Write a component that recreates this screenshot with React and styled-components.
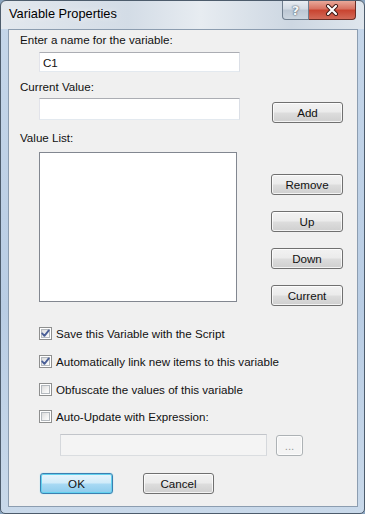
import React from 'react';
import styled, { createGlobalStyle } from 'styled-components';

const GlobalStyle = createGlobalStyle`
  html, body { margin:0; padding:0; background:#8aa4bf; overflow:hidden; }
  body { font-family: "Liberation Sans", Arial, sans-serif; }
`;

const Window = styled.div`
  width:365px;
  height:514px;
  box-sizing:border-box;
  display:flex;
  flex-direction:column;
  padding:0 6px 6px 7px;
  border:1px solid #4d5c6c;
  border-radius:6px 6px 5px 5px;
  background:
    linear-gradient(90deg, #e3e8ee 0%, #d3dce6 35%, #e7ecf1 55%, #cdd7e2 80%, #dfe6ed 100%) top / 100% 28px no-repeat,
    linear-gradient(180deg, #c6d7ea 0%, #b9cde4 60%, #c9d9ea 100%);
`;

const TitleBar = styled.div`
  height:28px;
  display:flex;
  align-items:flex-start;
  justify-content:space-between;
`;

const Caption = styled.div`
  font-family:"Liberation Sans", Arial, sans-serif;
  font-size:12.8px;
  line-height:16px;
  color:#000;
  padding:5px 0 0 1px;
  text-shadow:0 0 6px rgba(255,255,255,.9);
`;

const CaptionButtons = styled.div`
  display:flex;
  margin-right:2px;
`;

const CaptionButton = styled.div`
  width:${p => p.$w}px;
  height:19px;
  box-sizing:border-box;
  display:flex;
  align-items:center;
  justify-content:center;
  border:1px solid ${p => (p.$close ? '#6b2d25' : '#6f7e8e')};
  border-top:none;
  border-left:${p => (p.$close ? 'none' : '1px solid #6f7e8e')};
  border-radius:${p => (p.$close ? '0 0 4px 0' : '0 0 0 4px')};
  background:${p =>
    p.$close
      ? 'linear-gradient(180deg, #e9a99a 0%, #d7705f 45%, #c8432f 50%, #d26a58 100%)'
      : 'linear-gradient(180deg, #e8edf2 0%, #d2dae3 45%, #bcc7d3 50%, #cbd5df 100%)'};
  font:bold 13px "DejaVu Sans", sans-serif;
  color:#f4f6f8;
  text-shadow:0 0 2px #4a5a6a, 0 0 1px #4a5a6a;
`;

const Client = styled.div`
  flex:1;
  display:flex;
  flex-direction:column;
  align-items:flex-start;
  padding:3px 0 0 11px;
  background:#f0f0f0;
  border:1px solid #8c9db0;
`;

const Label = styled.div`
  font-size:11.6px;
  line-height:14px;
  color:#111;
  margin-top:${p => p.$mt || 0}px;
`;

const Row = styled.div`
  display:flex;
  align-items:flex-start;
  margin-top:${p => p.$mt || 0}px;
  margin-left:${p => p.$ml || 0}px;
`;

const TextBox = styled.input`
  width:${p => p.$w}px;
  height:${p => p.$h}px;
  box-sizing:border-box;
  margin:0 0 0 ${p => p.$ml || 0}px;
  margin-top:${p => p.$mt || 0}px;
  padding:0 3px;
  font:11.6px "Liberation Sans", Arial, sans-serif;
  color:#111;
  background:#fff;
  border:1px solid;
  border-color:#abadb3 #dbdfe6 #e3e9ef #e2e3ea;
  outline:none;

  &:disabled {
    background:#f4f4f4;
    border-color:#c2c5ca #d5d8dc #dadde0 #d5d8dc;
  }
`;

const ListBox = styled.div`
  width:198px;
  height:150px;
  box-sizing:border-box;
  background:#fff;
  border:1px solid #828790;
`;

const ButtonColumn = styled.div`
  display:flex;
  flex-direction:column;
  gap:16px;
  margin-left:34px;
  margin-top:22px;
  margin-bottom:-4px;
`;

const Button = styled.button`
  width:${p => p.$w || 72}px;
  height:${p => p.$h || 21}px;
  box-sizing:border-box;
  margin:${p => p.$mt || 0}px 0 0 ${p => p.$ml || 0}px;
  padding:0;
  font:11.6px "Liberation Sans", Arial, sans-serif;
  color:#111;
  border:1px solid #707070;
  border-radius:3px;
  background:linear-gradient(180deg, #f2f2f2 0%, #ebebeb 48%, #dddddd 52%, #cfcfcf 100%);
  box-shadow:inset 0 0 0 1px rgba(255,255,255,.75);

  &:disabled {
    color:#9a9a9a;
    border-color:#adb2b5;
    background:#f4f4f4;
    box-shadow:inset 0 0 0 1px #fcfcfc;
  }
`;

const DefaultButton = styled(Button)`
  border-color:#3c7fb1;
  background:linear-gradient(180deg, #e8f5fc 0%, #d0ebf9 48%, #a9daf4 52%, #8ccbec 100%);
  box-shadow:inset 0 0 0 1px #63d2ef, 0 0 1px #63d2ef;
`;

const CheckRow = styled.label`
  display:flex;
  align-items:center;
  gap:4px;
  height:17px;
  margin-left:19px;
  margin-top:${p => p.$mt}px;
  font-size:11.6px;
  color:#111;
`;

const Box = styled.span`
  width:13px;
  height:13px;
  box-sizing:border-box;
  flex:none;
  display:grid;
  place-items:center;
  border:1px solid #8e8f8f;
  background:#fff;

  & > * { grid-area:1 / 1; }
`;

const BoxInner = styled.span`
  width:9px;
  height:9px;
  box-sizing:border-box;
  border:1px solid #b4b9be;
  background:linear-gradient(135deg, #dcdcdc 0%, #f2f2f2 60%, #fdfdfd 100%);
`;

function Check({ checked, mt, children }) {
  return (
    <CheckRow $mt={mt}>
      <Box>
        <BoxInner />
        {checked && (
          <svg width="11" height="11" viewBox="0 0 11 11">
            <path d="M2.2 5.4 L4.4 7.8 L8.8 2.4" fill="none" stroke="#4a5f97" strokeWidth="1.9" strokeLinecap="round" strokeLinejoin="round" />
          </svg>
        )}
      </Box>
      {children}
    </CheckRow>
  );
}

export default function App() {
  return (
    <>
      <GlobalStyle />
      <Window>
        <TitleBar>
          <Caption>Variable Properties</Caption>
          <CaptionButtons>
            <CaptionButton $w={27}>?</CaptionButton>
            <CaptionButton $w={47} $close>
              <svg width="14" height="12" viewBox="0 0 14 12">
                <path d="M3 2 L11 10 M11 2 L3 10" stroke="#3b1712" strokeWidth="4" strokeLinecap="round" />
                <path d="M3 2 L11 10 M11 2 L3 10" stroke="#ffffff" strokeWidth="2.2" strokeLinecap="round" />
              </svg>
            </CaptionButton>
          </CaptionButtons>
        </TitleBar>
        <Client>
          <Label>Enter a name for the variable:</Label>
          <TextBox $w={201} $h={20} $ml={19} $mt={5} defaultValue="C1" />
          <Label $mt={8}>Current Value:</Label>
          <Row $mt={4} $ml={19}>
            <TextBox $w={201} $h={22} defaultValue="" />
            <Button $w={71} $ml={32} $mt={4}>Add</Button>
          </Row>
          <Label $mt={8}>Value List:</Label>
          <Row $mt={7} $ml={19}>
            <ListBox />
            <ButtonColumn>
              <Button>Remove</Button>
              <Button>Up</Button>
              <Button>Down</Button>
              <Button>Current</Button>
            </ButtonColumn>
          </Row>
          <Check checked mt={23}>Save this Variable with the Script</Check>
          <Check checked mt={11}>Automatically link new items to this variable</Check>
          <Check mt={11}>Obfuscate the values of this variable</Check>
          <Check mt={10}>Auto-Update with Expression:</Check>
          <Row $mt={9} $ml={40}>
            <TextBox $w={207} $h={22} disabled defaultValue="" />
            <Button $w={27} $h={21} $ml={9} $mt={1} disabled>...</Button>
          </Row>
          <Row $mt={17} $ml={20}>
            <DefaultButton $w={73}>OK</DefaultButton>
            <Button $w={71} $ml={30}>Cancel</Button>
          </Row>
        </Client>
      </Window>
    </>
  );
}
